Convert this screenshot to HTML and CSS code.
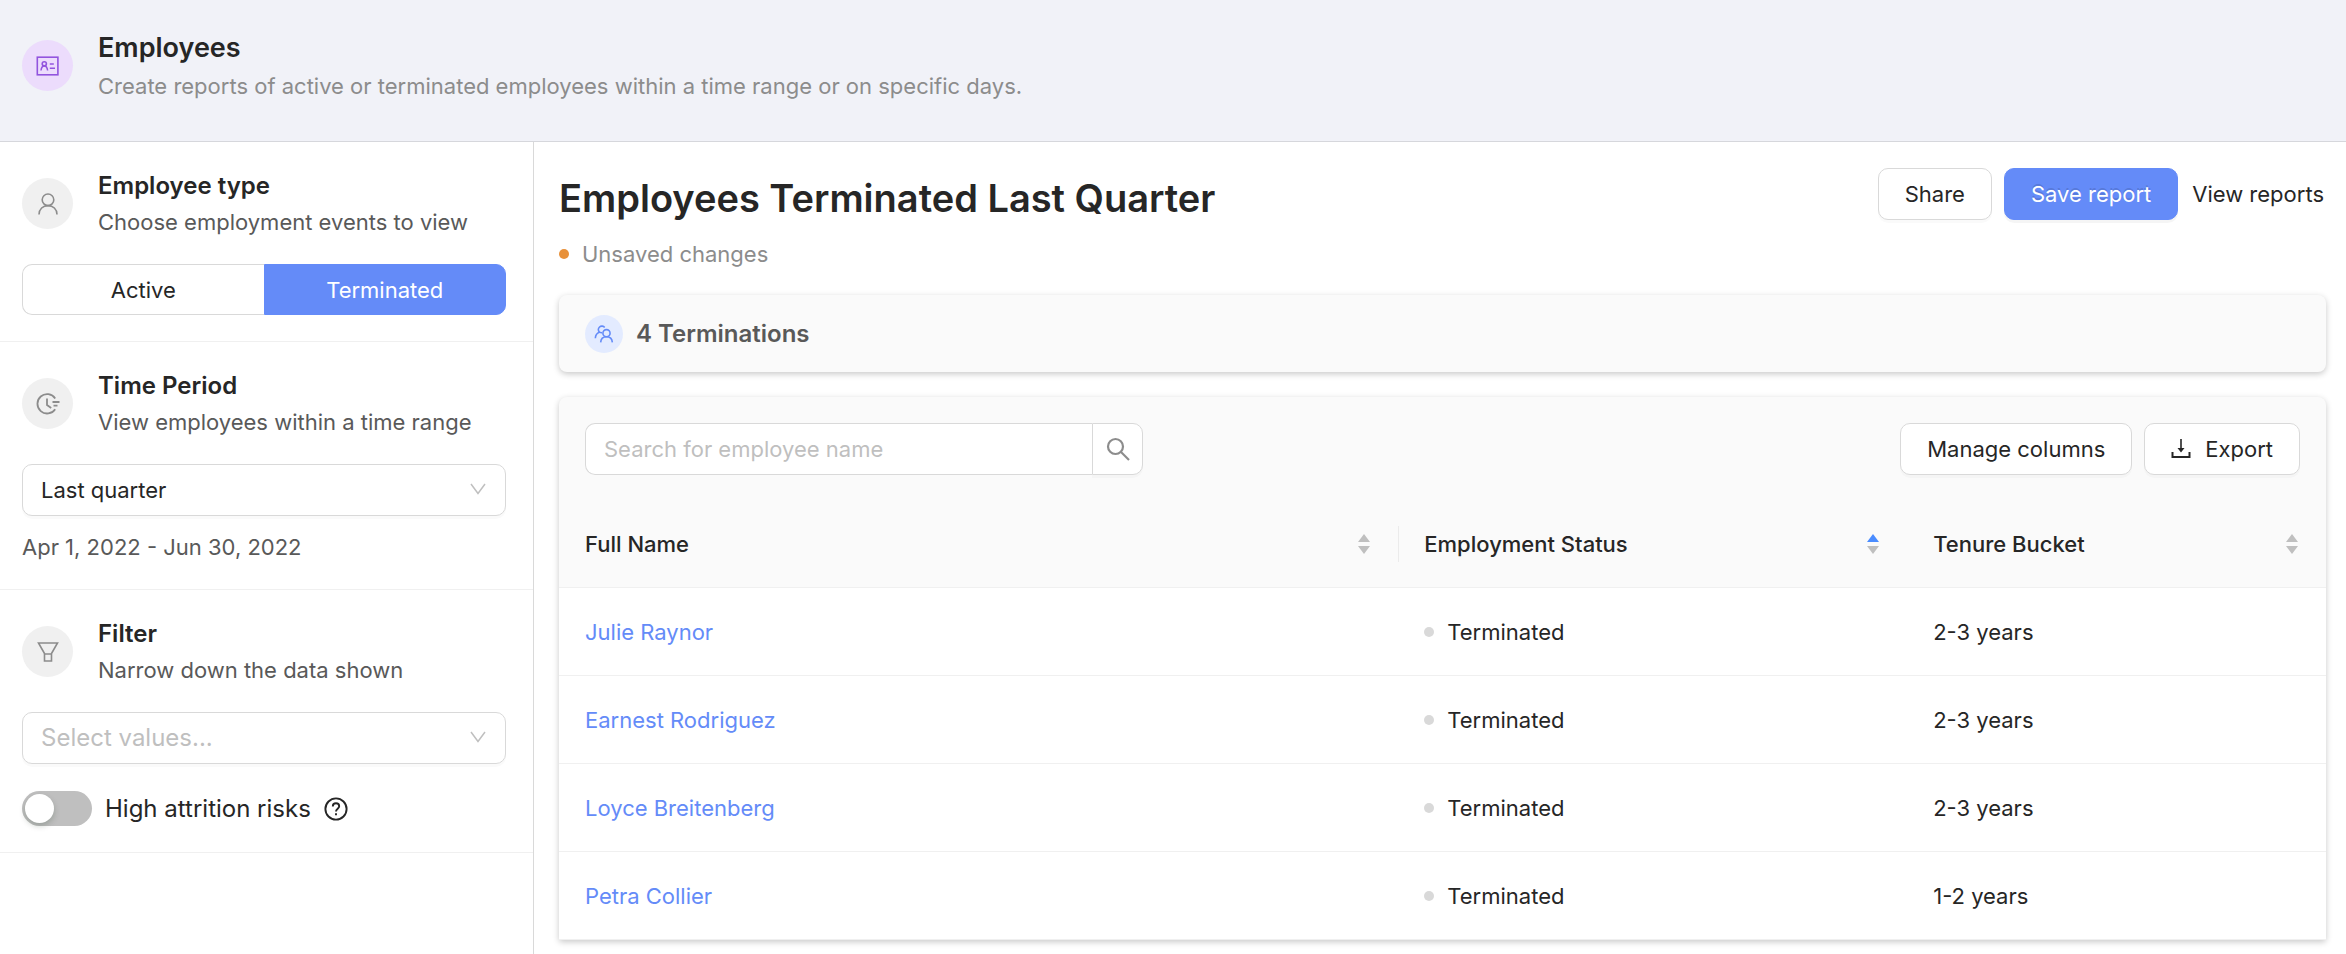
FILE: index.html
```html
<!DOCTYPE html>
<html lang="en">
<head>
<meta charset="utf-8">
<title>Employees</title>
<link rel="stylesheet" href="styles.css">
</head>
<body>
<div class="app">
  <header class="page-header">
    <span class="badge badge-purple">
      <svg class="icon" viewBox="0 0 24 24" fill="none" stroke="currentColor" stroke-width="1.6"><rect x="1.300" y="3.200" width="20.600" height="17.600"/><circle cx="8.300" cy="9.800" r="2.100"/><path d="M5 16.500c.3-3 1.500-4.600 3.300-4.600s3 1.600 3.300 4.600M13.800 10.100h4M13.800 14.200h5.200" stroke-width="1.500"/></svg>
    </span>
    <div class="heading heading-tight">
      <h1 class="page-title">Employees</h1>
      <p class="muted">Create reports of active or terminated employees within a time range or on specific days.</p>
    </div>
  </header>
  <div class="layout">
    <aside class="sidebar">
      <section class="panel">
        <div class="panel-head">
          <span class="badge">
            <svg class="icon" viewBox="0 0 24 24" fill="none" stroke="currentColor" stroke-width="1.600"><circle cx="12" cy="7.800" r="5.800"/><path d="M3 22.500c0-5.500 4-8.900 9-8.900s9 3.400 9 8.900"/></svg>
          </span>
          <div class="heading">
            <h2 class="panel-title">Employee type</h2>
            <p class="desc">Choose employment events to view</p>
          </div>
        </div>
        <div class="segmented">
          <button type="button" class="segment" aria-pressed="false">Active</button>
          <button type="button" class="segment segment-on" aria-pressed="true">Terminated</button>
        </div>
      </section>
      <section class="panel">
        <div class="panel-head">
          <span class="badge">
            <svg class="icon" viewBox="0 0 24 24" fill="none" stroke="currentColor" stroke-width="1.800"><path d="M19.200 6.400A9.700 9.700 0 1 0 19.200 17.200"/><path d="M11 6.500v6.500l4.200 3M16.500 10h7M17.500 13.600h4"/></svg>
          </span>
          <div class="heading">
            <h2 class="panel-title"><label for="period">Time Period</label></h2>
            <p class="desc">View employees within a time range</p>
          </div>
        </div>
        <div class="select-wrap">
          <select id="period" class="select"><option>Last quarter</option></select>
          <svg class="chevron" viewBox="0 0 16 12" fill="none" stroke="currentColor" stroke-width="1.500"><path d="M1 1l7 9.500L15 1"/></svg>
        </div>
        <p class="desc range">Apr 1, 2022 - Jun 30, 2022</p>
      </section>
      <section class="panel">
        <div class="panel-head">
          <span class="badge">
            <svg class="icon" viewBox="0 0 24 24" fill="none" stroke="currentColor" stroke-width="1.600"><path d="M2.500 3h19l-6 10.500V21h-7v-7.500zM8.500 14h7"/></svg>
          </span>
          <div class="heading">
            <h2 class="panel-title"><label for="filter">Filter</label></h2>
            <p class="desc">Narrow down the data shown</p>
          </div>
        </div>
        <div class="select-wrap">
          <select id="filter" class="select select-empty"><option>Select values...</option></select>
          <svg class="chevron" viewBox="0 0 16 12" fill="none" stroke="currentColor" stroke-width="1.500"><path d="M1 1l7 9.500L15 1"/></svg>
        </div>
        <div class="toggle-row">
          <input type="checkbox" role="switch" id="risk" class="switch">
          <label for="risk">High attrition risks</label>
          <svg class="help" viewBox="0 0 24 24" fill="none" stroke="currentColor" stroke-width="1.900"><circle cx="12" cy="12" r="10.600"/><path d="M8.800 9.500c0-2 1.400-3.200 3.200-3.200s3.200 1.200 3.200 3c0 2.400-3.200 2.500-3.200 5.200M12 16.200v2"/></svg>
        </div>
      </section>
    </aside>
    <main class="main">
      <div class="report-head">
        <div>
          <h2 class="report-title">Employees Terminated Last Quarter</h2>
          <p class="muted status"><span class="dot dot-orange"></span>Unsaved changes</p>
        </div>
        <div class="actions">
          <button type="button" class="btn">Share</button>
          <button type="button" class="btn btn-primary">Save report</button>
          <a href="#reports" class="text-link">View reports</a>
        </div>
      </div>
      <section class="card summary">
        <span class="badge badge-blue">
          <svg class="icon-sm" viewBox="0 0 24 24" fill="none" stroke="currentColor" stroke-width="1.900"><circle cx="15" cy="11" r="4.300"/><path d="M8 22c.3-4.300 3-6.700 7-6.700s6.700 2.400 7 6.700"/><path d="M12.800 4.300A4.200 4.200 0 1 0 6.500 9.800C3.700 10.700 1.800 13.200 1.600 17M6.500 9.800c1 .5 2 .7 3.200.6"/></svg>
        </span>
        <h3 class="summary-title">4 Terminations</h3>
      </section>
      <section class="card">
        <div class="toolbar">
          <form class="search" role="search">
            <input type="search" class="search-input" placeholder="Search for employee name" aria-label="Search for employee name">
            <button type="button" class="search-btn" aria-label="Search">
              <svg class="icon" viewBox="0 0 24 24" fill="none" stroke="currentColor" stroke-width="2.200"><circle cx="9.500" cy="9.500" r="7.500"/><path d="M15 15l8 8"/></svg>
            </button>
          </form>
          <div class="tools">
            <button type="button" class="btn">Manage columns</button>
            <button type="button" class="btn btn-icon">
              <svg class="icon-dl" viewBox="0 0 20 20"><path d="M1.500 13v5h17v-5" fill="none" stroke="currentColor" stroke-width="2"/><path d="M9.200 0h1.600v9h2.700L10 13.500 6.500 9h2.700z" fill="currentColor"/></svg>
              Export
            </button>
          </div>
        </div>
        <table class="table">
          <colgroup><col class="col-name"><col class="col-status"><col class="col-tenure"></colgroup>
          <thead>
            <tr>
              <th scope="col"><div class="th">Full Name<svg class="sorter" viewBox="0 0 12 20"><path d="M6 0l6 8H0z"/><path d="M0 12h12l-6 8z"/></svg></div></th>
              <th scope="col" aria-sort="ascending" class="split"><div class="th">Employment Status<svg class="sorter" viewBox="0 0 12 20"><path class="sorted" d="M6 0l6 8H0z"/><path d="M0 12h12l-6 8z"/></svg></div></th>
              <th scope="col"><div class="th">Tenure Bucket<svg class="sorter" viewBox="0 0 12 20"><path d="M6 0l6 8H0z"/><path d="M0 12h12l-6 8z"/></svg></div></th>
            </tr>
          </thead>
          <tbody>
            <tr><td><a href="#julie" class="name">Julie Raynor</a></td><td><span class="status"><span class="dot"></span>Terminated</span></td><td>2-3 years</td></tr>
            <tr><td><a href="#earnest" class="name">Earnest Rodriguez</a></td><td><span class="status"><span class="dot"></span>Terminated</span></td><td>2-3 years</td></tr>
            <tr><td><a href="#loyce" class="name">Loyce Breitenberg</a></td><td><span class="status"><span class="dot"></span>Terminated</span></td><td>2-3 years</td></tr>
            <tr><td><a href="#petra" class="name">Petra Collier</a></td><td><span class="status"><span class="dot"></span>Terminated</span></td><td>1-2 years</td></tr>
          </tbody>
        </table>
      </section>
    </main>
  </div>
</div>
</body>
</html>
```

FILE: styles.css
```css
*, *::before, *::after { box-sizing: border-box; }
body {
  margin: 0;
  background: #fff;
  color: #262626;
  font: 22px/32px Inter, "Liberation Sans", sans-serif;
}
h1, h2, h3, p { margin: 0; }
button, input, select { font: inherit; color: inherit; margin: 0; }
a { text-decoration: none; color: inherit; }
svg { display: block; flex: none; }

.app { display: flex; flex-direction: column; min-height: 100vh; }
.page-header {
  display: flex;
  align-items: flex-start;
  gap: 25px;
  padding: 28px 22px 39px;
  background: #f1f2f8;
  border-bottom: 1px solid #d6d7dc;
}
.layout { display: flex; flex: 1; }
.heading { display: flex; flex-direction: column; gap: 4px; }
.heading-tight { gap: 2px; }
.page-title { font-size: 27px; line-height: 40px; font-weight: 600; }
.panel-title { font-size: 24px; line-height: 32px; font-weight: 600; }
.muted { color: #8c8c8c; }
.desc { color: #595959; }

.badge {
  display: flex;
  align-items: center;
  justify-content: center;
  flex: none;
  width: 51px;
  height: 51px;
  margin-top: 8px;
  border-radius: 50%;
  background: #f0f0f0;
  color: #8c8c8c;
}
.badge-purple { margin-top: 12px; background: #ecdcfc; color: #9254de; }
.badge-blue { width: 38px; height: 38px; margin: 0; background: #e3ebff; color: #648bf8; }
.icon { width: 24px; height: 24px; }
.icon-sm { width: 20px; height: 20px; }

.sidebar { flex: none; width: 534px; border-right: 1px solid #d9d9d9; }
.panel { padding: 28px 27px 26px 22px; border-bottom: 1px solid #f0f0f0; }
.panel-head { display: flex; gap: 25px; margin-bottom: 26px; }

.segmented { display: flex; }
.segment {
  flex: 1;
  height: 51px;
  border: 1px solid #d9d9d9;
  border-right: 0;
  border-radius: 10px 0 0 10px;
  background: #fff;
}
.segment-on { border: 1px solid #648bf8; border-radius: 0 10px 10px 0; background: #648bf8; color: #fff; }

.select-wrap { position: relative; }
.select {
  display: block;
  width: 100%;
  height: 52px;
  padding: 0 48px 0 18px;
  border: 1px solid #d9d9d9;
  border-radius: 10px;
  background: #fff;
  appearance: none;
  box-shadow: 0 3px 0 rgba(0, 0, 0, .02);
}
.select-empty { font-size: 24px; color: #bfbfbf; }
.chevron { position: absolute; right: 20px; top: 19px; width: 16px; height: 12px; color: #bfbfbf; pointer-events: none; }
.range { margin-top: 15px; }

.toggle-row { display: flex; align-items: center; gap: 13px; margin-top: 27px; height: 35px; font-size: 24px; }
.switch {
  appearance: none;
  display: flex;
  align-items: center;
  width: 70px;
  height: 35px;
  padding: 3px;
  border-radius: 18px;
  background: #bfbfbf;
}
.switch::before { content: ""; width: 29px; height: 29px; border-radius: 50%; background: #fff; box-shadow: 0 3px 6px rgba(0, 35, 11, .2); }
.help { width: 24px; height: 24px; }

.main { flex: 1; min-width: 0; padding: 26px 20px 14px 25px; }
.report-head { display: flex; justify-content: space-between; align-items: flex-start; margin-bottom: 25px; }
.report-title { font-size: 38px; line-height: 60px; font-weight: 600; }
.status { display: flex; align-items: center; gap: 13px; }
.report-head .status { margin-top: 10px; }
.dot { width: 10px; height: 10px; border-radius: 50%; background: #d9d9d9; }
.dot-orange { background: #e8913a; }
.actions, .tools { display: flex; align-items: center; gap: 12px; }
.btn {
  height: 52px;
  padding: 0 26px;
  border: 1px solid #d9d9d9;
  border-radius: 10px;
  background: #fff;
  box-shadow: 0 3px 0 rgba(0, 0, 0, .02);
}
.btn-primary { border-color: #648bf8; background: #648bf8; color: #fff; text-shadow: 0 -2px 0 rgba(0, 0, 0, .12); box-shadow: 0 3px 0 rgba(0, 0, 0, .04); }
.btn-icon { display: flex; align-items: center; gap: 14px; }
.icon-dl { width: 20px; height: 20px; }
.text-link { padding: 0 2px; }

.card {
  border-radius: 8px 8px 2px 2px;
  background: #fafafa;
  box-shadow: 0 2px 6px rgba(0, 0, 0, .22);
}
.summary { display: flex; align-items: center; gap: 13px; height: 77px; padding: 0 26px; margin-bottom: 25px; border-radius: 8px; }
.summary-title { font-size: 24px; font-weight: 600; color: #595959; }
.toolbar { display: flex; justify-content: space-between; padding: 26px 26px 25px; }
.search { display: flex; width: 558px; }
.search-input {
  flex: 1;
  min-width: 0;
  height: 52px;
  padding: 0 18px;
  border: 1px solid #d9d9d9;
  border-right: 0;
  border-radius: 10px 0 0 10px;
  background: #fff;
  appearance: none;
}
.search-input::placeholder { color: #bfbfbf; opacity: 1; }
.search-btn {
  display: flex;
  align-items: center;
  justify-content: center;
  width: 51px;
  padding: 0;
  border: 1px solid #d9d9d9;
  border-radius: 0 10px 10px 0;
  background: #fff;
  color: #8c8c8c;
  box-shadow: 0 3px 0 rgba(0, 0, 0, .02);
}

.table { width: 100%; table-layout: fixed; border-collapse: separate; border-spacing: 0; }
.col-name { width: 47.5%; }
.col-status { width: 28.8%; }
.col-tenure { width: 23.7%; }
.table th, .table td { height: 88px; padding: 0 26px; text-align: left; border-bottom: 1px solid #f0f0f0; }
.table th { font-weight: 500; }
.table td { background: #fff; }
.split { background: linear-gradient(#ebebeb, #ebebeb) left center / 1px 36px no-repeat; }
.th { display: flex; align-items: center; justify-content: space-between; padding-right: 2px; }
.sorter { width: 12px; height: 20px; fill: #bfbfbf; }
.sorted { fill: #4a8cff; }
.name { color: #648bf8; }
```
